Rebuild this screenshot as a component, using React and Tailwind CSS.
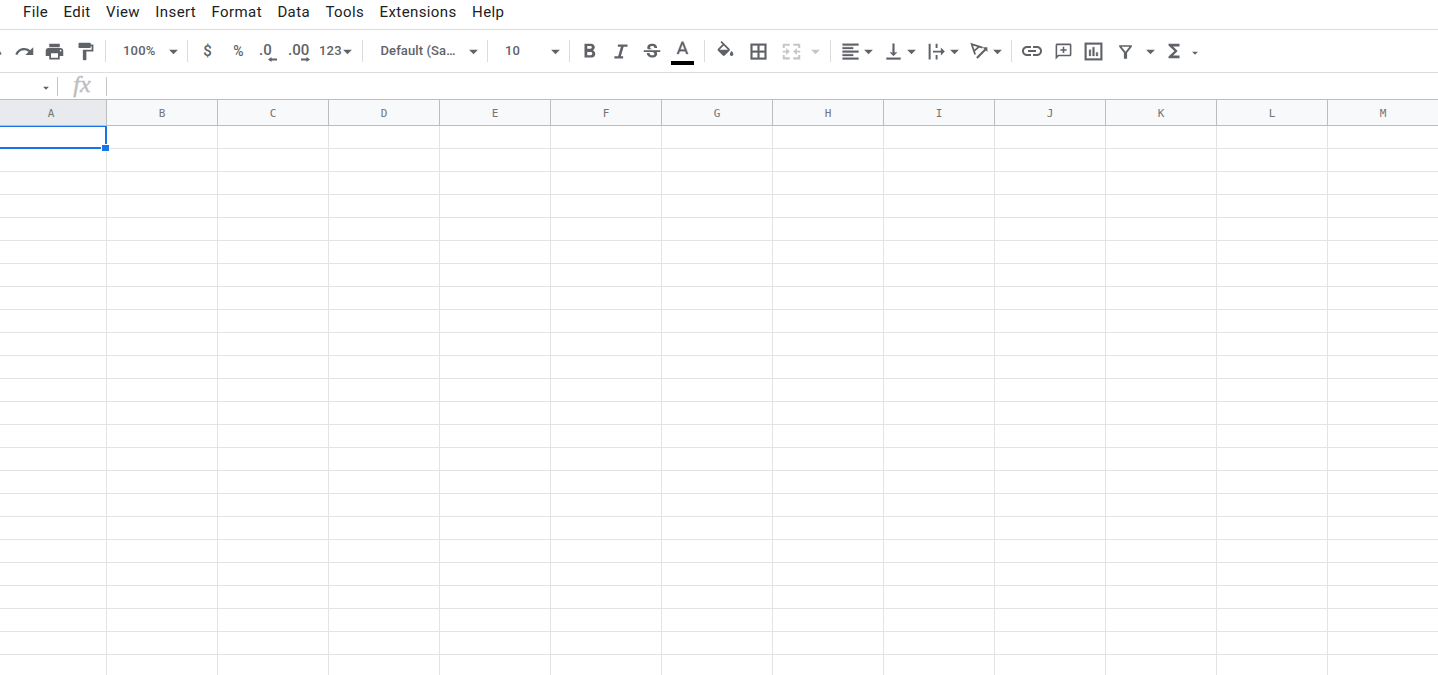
const MENUS = ['File', 'Edit', 'View', 'Insert', 'Format', 'Data', 'Tools', 'Extensions', 'Help']
const COLUMNS = ['A', 'B', 'C', 'D', 'E', 'F', 'G', 'H', 'I', 'J', 'K', 'L', 'M']
const ROWS = Array.from({ length: 24 }, (_, i) => i + 1)

const ICONS = {
  undo: 'M12.5 8c-2.65 0-5.05.99-6.9 2.6L2 7v9h9l-3.62-3.62c1.39-1.16 3.16-1.88 5.12-1.88 3.54 0 6.55 2.31 7.6 5.5l2.37-.78C21.08 11.03 17.15 8 12.5 8z',
  redo: 'M18.4 10.6C16.55 8.99 14.15 8 11.5 8c-4.65 0-8.58 3.03-9.96 7.22L3.9 16c1.05-3.19 4.05-5.5 7.6-5.5 1.95 0 3.73.72 5.12 1.88L13 16h9V7l-3.6 3.6z',
  print: 'M19 8H5c-1.66 0-3 1.34-3 3v6h4v4h12v-4h4v-6c0-1.66-1.34-3-3-3zm-3 11H8v-5h8v5zm3-7c-.55 0-1-.45-1-1s.45-1 1-1 1 .45 1 1-.45 1-1 1zm-1-9H6v4h12V3z',
  paint: 'M18 4V3c0-.55-.45-1-1-1H5c-.55 0-1 .45-1 1v4c0 .55.45 1 1 1h12c.55 0 1-.45 1-1V6h1v4H9v11c0 .55.45 1 1 1h2c.55 0 1-.45 1-1v-9h8V4h-3z',
  bold: 'M15.6 10.79c.97-.67 1.65-1.77 1.65-2.79 0-2.26-1.75-4-4-4H6v15h8.04c2.09 0 3.71-1.7 3.71-3.79 0-1.52-.86-2.82-2.15-3.42zM9 6.5h3.5c.83 0 1.5.67 1.5 1.5s-.67 1.5-1.5 1.5H9v-3zm4 10H9v-3.5h4c.83 0 1.5.67 1.5 1.75s-.67 1.75-1.5 1.75z',
  italic: 'M9 4v2.700h3.500L9.300 17.300H5V20h10v-2.700h-2.600l3.200-10.600H20V4H9z',
  strike: 'M7.24 8.75c-.26-.48-.39-1.03-.39-1.67 0-.61.13-1.16.4-1.67.26-.5.63-.93 1.11-1.29.48-.35 1.05-.63 1.7-.83.66-.19 1.39-.29 2.18-.29.81 0 1.54.11 2.21.34.66.22 1.23.54 1.69.94.47.4.83.88 1.08 1.43s.38 1.15.38 1.81h-3.01c0-.31-.05-.59-.15-.85-.09-.27-.24-.49-.44-.68-.2-.19-.45-.33-.75-.44-.3-.1-.66-.16-1.06-.16-.39 0-.74.04-1.03.13s-.53.21-.72.36c-.19.16-.34.34-.44.55-.1.21-.15.43-.15.66 0 .48.25.88.74 1.21.38.25.77.48 1.41.7H7.39c-.05-.08-.11-.17-.15-.25zM21 12v-2H3v2h9.62c.18.07.4.14.55.2.37.17.66.34.87.51s.35.36.43.57c.07.2.11.43.11.69 0 .23-.05.45-.14.66-.09.2-.23.38-.42.53-.19.15-.42.26-.71.35-.29.08-.63.13-1.01.13-.43 0-.83-.04-1.18-.13s-.66-.23-.91-.42c-.25-.19-.45-.44-.59-.75s-.25-.76-.25-1.21H6.4c0 .55.08 1.13.24 1.58s.37.85.65 1.21c.28.35.6.66.98.92.37.26.78.48 1.22.65.44.17.9.3 1.38.39.48.08.96.13 1.44.13.8 0 1.53-.09 2.18-.28s1.21-.45 1.67-.79c.46-.34.82-.77 1.07-1.27s.38-1.07.38-1.71c0-.6-.1-1.14-.31-1.61-.05-.11-.11-.23-.17-.33H21V12z',
  textColor: 'M11 3L5.5 17h2.25l1.12-3h6.25l1.12 3h2.25L13 3h-2zm-1.38 9L12 5.67 14.38 12H9.62z',
  fill: 'M16.56 8.94L7.62 0 6.21 1.41l2.38 2.38-5.15 5.15c-.59.59-.59 1.54 0 2.12l5.5 5.5c.29.29.68.44 1.06.44s.77-.15 1.06-.44l5.5-5.5c.59-.58.59-1.53 0-2.12zM5.21 10L10 5.21 14.79 10H5.21zM19 11.5s-2 2.17-2 3.5c0 1.1.9 2 2 2s2-.9 2-2c0-1.33-2-3.5-2-3.5z',
  borders: 'M3 3v18h18V3H3zm8 16H5v-6h6v6zm0-8H5V5h6v6zm8 8h-6v-6h6v6zm0-8h-6V5h6v6z',
  merge: 'M2 3h8v2.300H4.300V8H2V3zM14 3h8v5h-2.300V5.300H14V3zM2 16h2.300v2.700H10V21H2v-5zM19.700 16H22v5h-8v-2.300h5.700V16zM2 11h4V8l4 4-4 4v-3H2v-2zM22 11h-4V8l-4 4 4 4v-3h4v-2z',
  alignLeft: 'M15 15H3v2h12v-2zm0-8H3v2h12V7zM3 13h18v-2H3v2zm0 8h18v-2H3v2zM3 3v2h18V3H3z',
  alignBottom: 'M16 13h-3V3h-2v10H8l4 4 4-4zM4 19v2h16v-2H4z',
  overflow: 'M3 3h2.3v18H3V3zM11 3h2.2v5H11V3zM11 16h2.2v5H11v-5zM8 11h9V7.5l4.5 4.5-4.500 4.500V13H8v-2z',
  link: 'M3.9 12c0-1.71 1.39-3.1 3.1-3.1h4V7H7c-2.76 0-5 2.24-5 5s2.24 5 5 5h4v-1.9H7c-1.71 0-3.1-1.39-3.1-3.1zM8 13h8v-2H8v2zm9-6h-4v1.9h4c1.71 0 3.1 1.39 3.1 3.1s-1.39 3.1-3.1 3.1h-4V17h4c2.76 0 5-2.24 5-5s-2.24-5-5-5z',
  comment: 'M20 2H4c-1.1 0-2 .9-2 2v18l4-4h14c1.1 0 2-.9 2-2V4c0-1.1-.9-2-2-2zm0 14H5.2L4 17.2V4h16v12zM11 14h2v-3h3V9h-3V6h-2v3H8v2h3v3z',
  chart: 'M22 2H2v20h20V2zm-2 18H4V4h16v16zM7 10h2v7H7v-7zm4-3h2v10h-2V7zm4 6h2v4h-2v-4z',
  filter: 'M4 4h16v2l-6 7.5V21h-4v-7.500L4 6V4zm3 2l5 6.200L17 6H7z',
  sum: 'M18 4H6v2l6.5 6L6 18v2h12v-3h-7l5-5-5-5h7z',
}

// Outline icons get a hairline stroke so they carry the same weight as the labels
const HEAVY = 'size-[21px] stroke-current stroke-[0.4]'

function Icon({ name, className = 'size-[21px]' }) {
  return (
    <svg viewBox="0 0 24 24" className={`${className} shrink-0 fill-current`}>
      <path d={ICONS[name]} />
    </svg>
  )
}

function Caret({ small }) {
  return (
    <svg viewBox="0 0 24 24" className={`${small ? 'size-[14px]' : 'size-[21px]'} shrink-0 fill-current`}>
      <path d="M7 10l5 5 5-5z" />
    </svg>
  )
}

function Slot({ className, children }) {
  return <button className={`flex h-full shrink-0 items-center ${className}`}>{children}</button>
}

function Divider() {
  return <div className="h-[22px] w-px shrink-0 bg-[#dadce0]" />
}

function RotateIcon() {
  return (
    <svg viewBox="0 0 24 24" className="size-[21px] shrink-0" fill="none" stroke="currentColor" strokeWidth="2">
      <path d="M7 15.500L3 3.500l12.500 4M5.700 11.500l5.800-5" />
      <path d="M9 19.500L19 9.500" strokeWidth="2.400" />
      <path d="M15.500 7h5.500v5.500z" fill="currentColor" stroke="none" />
    </svg>
  )
}

function DecimalArrow({ flip }) {
  return (
    <svg viewBox="0 0 9 5" className={`absolute top-[27px] h-[5px] w-[9px] fill-current ${flip ? 'left-[16px] -scale-x-100' : 'left-[14px]'}`}>
      <path d="M0 2.500L3.500 0v1.500H9v2H3.500V5z" />
    </svg>
  )
}

function Toolbar() {
  return (
    <div className="flex h-[44px] items-center overflow-hidden border-y border-[#dadce0] text-[13px] font-medium tracking-[0.2px] text-[#5f6368]">
      <Slot className="-ml-[23px] w-[30px] justify-center"><Icon name="undo" /></Slot>
      <Slot className="w-8 pl-[7px]"><Icon name="redo" /></Slot>
      <Slot className="w-[30px] justify-center"><Icon name="print" /></Slot>
      <Slot className="w-[36px] pl-[6px]"><Icon name="paint" /></Slot>
      <Divider />
      <Slot className="w-[81px] justify-between pr-[3px] pl-[17px]">100%<Caret /></Slot>
      <Divider />
      <Slot className="w-[35px] justify-center pl-1 text-[15px]">$</Slot>
      <Slot className="w-[31px] justify-center text-[14px]">%</Slot>
      <Slot className="relative w-[31px] pb-[2px] pl-[5px] text-[15px]">.0<DecimalArrow /></Slot>
      <Slot className="relative w-[32px] pb-[2px] pl-[3px] text-[15px] tracking-normal">.00<DecimalArrow flip /></Slot>
      <Slot className="w-[45px] justify-between pr-[4px] pl-[2px]">123<span className="-ml-2 flex"><Caret /></span></Slot>
      <Divider />
      <Slot className="w-[124px] justify-between pr-[3px] pl-[17.5px] tracking-[0.1px]">Default (Sa…<Caret /></Slot>
      <Divider />
      <Slot className="w-[81px] justify-between pr-[3px] pl-[17px]">10<Caret /></Slot>
      <Divider />
      <Slot className="w-[35px] justify-center pl-1"><Icon name="bold" className="size-[22px]" /></Slot>
      <Slot className="w-[31px] justify-center"><Icon name="italic" /></Slot>
      <Slot className="w-[31px] justify-center pt-px"><Icon name="strike" className="size-[22px]" /></Slot>
      <Slot className="w-[37px] flex-col pt-[9px] pr-[6px]">
        <Icon name="textColor" className={HEAVY} />
        <span className="mt-px h-1 w-[23px] bg-black" />
      </Slot>
      <Divider />
      <Slot className="w-[37px] pl-[10px]"><Icon name="fill" /></Slot>
      <Slot className="w-[32px] justify-center"><Icon name="borders" className={HEAVY} /></Slot>
      <Slot className="w-[56px] pl-[7px] text-[#c4c6c8]"><Icon name="merge" /><span className="ml-[3px]"><Caret /></span></Slot>
      <Divider />
      <Slot className="w-[48px] pl-[9px]"><Icon name="alignLeft" className={HEAVY} /><span className="-ml-[3px]"><Caret /></span></Slot>
      <Slot className="w-[43px] pl-[4px]"><Icon name="alignBottom" className={HEAVY} /><span className="-ml-[3px]"><Caret /></span></Slot>
      <Slot className="w-[43px] pl-[4px]"><Icon name="overflow" /><span className="-ml-[3px]"><Caret /></span></Slot>
      <Slot className="w-[46px] pl-[4px]"><RotateIcon /><span className="-ml-[3px]"><Caret /></span></Slot>
      <Divider />
      <Slot className="w-[36px] pl-[8px]"><Icon name="link" className="size-6" /></Slot>
      <Slot className="w-[30px] justify-center"><Icon name="comment" className="size-[19px]" /></Slot>
      <Slot className="w-[31px] justify-center"><Icon name="chart" className={HEAVY} /></Slot>
      <Slot className="w-[32px] justify-center"><Icon name="filter" className="size-[19px]" /></Slot>
      <Slot className="w-[19px] justify-center"><Caret /></Slot>
      <Slot className="w-[28px] justify-center"><Icon name="sum" className="size-[22px]" /></Slot>
      <Slot className="w-[14px] pt-[3px]"><Caret small /></Slot>
    </div>
  )
}

function FormulaBar() {
  return (
    <div className="flex h-[26px] items-center">
      <div className="flex h-full w-[57px] items-center justify-end pt-[3px] pr-1 text-[#5f6368]"><Caret small /></div>
      <div className="h-[19px] w-px bg-[#c6c6c6]" />
      <div className="flex w-[48px] justify-center pb-[5px] font-['Liberation_Serif',serif] text-[24px] leading-[22px] text-[#bdbdbd] italic [-webkit-text-stroke:0.4px_#bdbdbd]">fx</div>
      <div className="h-[19px] w-px bg-[#c6c6c6]" />
      <div className="flex-1" />
    </div>
  )
}

function Sheet() {
  return (
    <div>
      <div className="flex h-[27px] border-y border-[#bdbdbd] bg-[#f8f9fa]">
        {COLUMNS.map((col, i) => (
          <div
            key={col}
            className={`flex shrink-0 items-center justify-center border-r border-[#bdbdbd] pt-[3px] font-['DejaVu_Sans_Mono',monospace] text-[11px] text-[#757575] ${i === 0 ? 'w-[107px] bg-[#e8eaed] pr-1' : 'w-[111px]'}`}
          >
            {col}
          </div>
        ))}
      </div>
      <div className="relative">
        {ROWS.map((row) => (
          <div key={row} className="flex h-[23px]">
            {COLUMNS.map((col, i) => (
              <div key={col} className={`shrink-0 border-r border-b border-[#e2e3e3] ${i === 0 ? 'w-[107px]' : 'w-[111px]'}`} />
            ))}
          </div>
        ))}
        {/* Active cell outline with its fill handle */}
        <div className="absolute top-0 left-0 h-[23px] w-[107px] border-t border-r-2 border-b-2 border-[#1a73e8]" />
        <div className="absolute top-[18px] left-[101px] h-2 w-[9px] border border-white bg-[#1a73e8]" />
      </div>
    </div>
  )
}

export default function App() {
  return (
    <div className="h-[675px] w-[1438px] overflow-hidden bg-white font-['Roboto',sans-serif]">
      <div className="flex h-[29px] gap-[15.4px] pl-[23px] text-[15px] leading-6 tracking-[0.4px] text-[#202124]">
        {MENUS.map((menu) => (
          <span key={menu}>{menu}</span>
        ))}
      </div>
      <Toolbar />
      <FormulaBar />
      <Sheet />
    </div>
  )
}
